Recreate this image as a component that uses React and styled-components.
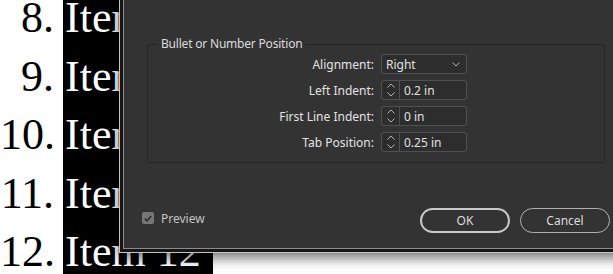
import React from 'react';
import styled, { createGlobalStyle } from 'styled-components';

const GlobalStyle = createGlobalStyle`
    html, body {
        margin : 0;
        padding : 0;
        overflow : hidden;
        background : #ffffff;
    }
`;

const items = [8, 9, 10, 11, 12];

const rows = [
    { label : 'Left Indent:', value : '0.2 in' },
    { label : 'First Line Indent:', value : '0 in' },
    { label : 'Tab Position:', value : '0.25 in' },
];

function Chevron({ up }) {
    return (
        <svg width="8" height="5" viewBox="0 0 8 5">
            <path d={up ? 'M0.5 4.5 L4 1 L7.5 4.5' : 'M0.5 0.5 L4 4 L7.5 0.5'} fill="none" stroke="#b4b4b4" strokeWidth="1" />
        </svg>
    );
}

function App() {
    return (
        <Page>
            <GlobalStyle />
            <List>
                {items.map(n => (
                    <Row key={n}>
                        <Num>{n}.</Num>
                        <Item>Item {n}</Item>
                    </Row>
                ))}
            </List>

            <Dialog>
                <Panel>
                    <Group>
                        <Legend>Bullet or Number Position</Legend>
                        <Grid>
                            <Label>Alignment:</Label>
                            <Field>
                                <Value>Right</Value>
                                <Caret><Chevron /></Caret>
                            </Field>
                            {rows.map(r => (
                                <React.Fragment key={r.label}>
                                    <Label>{r.label}</Label>
                                    <Field>
                                        <Spin>
                                            <Chevron up />
                                            <Chevron />
                                        </Spin>
                                        <Value>{r.value}</Value>
                                    </Field>
                                </React.Fragment>
                            ))}
                        </Grid>
                    </Group>
                    <Footer>
                        <Check>
                            <Box>
                                <svg width="8" height="7" viewBox="0 0 8 7">
                                    <path d="M0.8 3.6 L3 5.8 L7.2 1" fill="none" stroke="#2c2c2c" strokeWidth="1.6" />
                                </svg>
                            </Box>
                            Preview
                        </Check>
                        <Buttons>
                            <Button primary>OK</Button>
                            <Button>Cancel</Button>
                        </Buttons>
                    </Footer>
                </Panel>
            </Dialog>
        </Page>
    );
}

const Page = styled.div`
    position : relative;
    width : 613px;
    height : 274px;
    overflow : hidden;
`;

const List = styled.div`
    margin-top : -11px;

    font-family : "Liberation Serif", "Times New Roman", serif;
    font-size : 44px;
    line-height : 58.5px;
`;

const Row = styled.div`
    display : flex;
    height : 58.5px;
`;

const Num = styled.span`
    width : 63px;
    box-sizing : border-box;
    padding-right : 9px;

    text-align : right;
    color : #000000;
`;

const Item = styled.span`
    padding : 0 12px 0 2px;

    white-space : nowrap;
    color : #ffffff;
    background : #000000;
`;

const Dialog = styled.div`
    position : absolute;
    left : 119px;
    top : -20px;
    width : 513px;
    box-sizing : border-box;

    padding : 3px;

    background : #161616;
    border : 1px solid #c4c4c4;
    box-shadow : 0 5px 12px rgba(0, 0, 0, 0.55);
`;

const Panel = styled.div`
    display : flex;
    flex-direction : column;

    padding : 51px 17px 15px 18px;

    font-family : "Noto Sans", "Open Sans", sans-serif;
    font-size : 12px;
    color : #dedede;

    background : #333333;
    border : 1px solid #8c8c8c;
`;

const Group = styled.fieldset`
    margin : 0 5px 0 5px;
    padding : 2px 0 10px 0;

    border : 1px solid #262626;
    border-radius : 3px;
`;

const Legend = styled.legend`
    margin-left : 9px;
    padding : 0 4px;

    line-height : 16px;
    letter-spacing : -0.2px;
    color : #dcdcdc;
`;

const Grid = styled.div`
    display : grid;
    grid-template-columns : 226px 86px;
    grid-auto-rows : 20px;
    column-gap : 7px;
    row-gap : 6px;
`;

const Label = styled.div`
    display : flex;
    align-items : center;
    justify-content : flex-end;

    color : #e2e2e2;
`;

const Field = styled.div`
    display : flex;
    align-items : center;
    box-sizing : border-box;

    background : #2d2d2d;
    border : 1px solid #505050;
    border-radius : 3px;
`;

const Spin = styled.div`
    display : flex;
    flex-direction : column;
    align-items : center;
    justify-content : center;
    gap : 4px;

    width : 17px;
    height : 100%;

    border-right : 1px solid #505050;
`;

const Value = styled.span`
    flex : 1;
    padding-left : 4px;

    color : #e0e0e0;
`;

const Caret = styled.span`
    display : flex;
    padding-right : 6px;
`;

const Footer = styled.div`
    display : flex;
    align-items : center;
    justify-content : space-between;

    margin-top : 45px;
`;

const Check = styled.label`
    display : flex;
    align-items : center;
    gap : 7px;

    margin-bottom : 5px;

    color : #c4c4c4;
`;

const Box = styled.span`
    display : flex;
    align-items : center;
    justify-content : center;

    width : 12px;
    height : 12px;

    background : #767676;
    border-radius : 2px;
`;

const Buttons = styled.div`
    display : flex;
    gap : 10px;
`;

const Button = styled.button`
    width : 90px;
    height : 25px;
    box-sizing : border-box;

    font-family : inherit;
    font-size : 12px;
    color : #dcdcdc;

    background : transparent;
    border : ${p => p.primary ? '2px solid #c8c8c8' : '1px solid #b0b0b0'};
    border-radius : 13px;
`;

export default App;
